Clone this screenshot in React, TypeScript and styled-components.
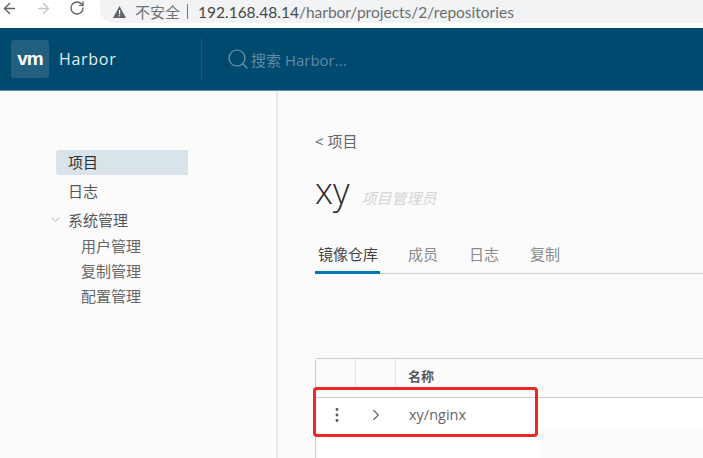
import styled, { createGlobalStyle } from "styled-components";
import { ChevronDown, ChevronRight, RotateCw, ArrowLeft, ArrowRight, Search } from "lucide-react";

const GlobalStyle = createGlobalStyle`
  html, body {
    margin: 0;
    padding: 0;
    height: 458px;
    overflow: hidden;
    background: #fbfbfb;
    font-family: "Open Sans", "Noto Sans CJK SC", sans-serif;
  }
`;

const Page = styled.div`
  width: 703px;
  height: 458px;
  display: flex;
  flex-direction: column;
  overflow: hidden;
`;

const BrowserBar = styled.div`
  height: 28px;
  flex: none;
  background: #fff;
  display: flex;
  align-items: flex-start;
`;

const NavIcons = styled.div`
  width: 100px;
  flex: none;
  height: 16px;
  padding-left: 1px;
  box-sizing: border-box;
  display: flex;
  align-items: center;
  gap: 17px;
`;

const AddressBar = styled.div`
  flex: 1;
  height: 23px;
  background: #f1f3f4;
  border-bottom-left-radius: 14px;
  display: flex;
  align-items: center;
  padding-left: 13px;
  color: #5f6368;
  white-space: nowrap;
  margin-right: -4px;
`;

const Warning = styled.svg`
  width: 13px;
  height: 12px;
  margin-right: 9px;
`;

const Insecure = styled.span`
  font-size: 15px;
  color: #6f7275;
`;

const Divider = styled.span`
  width: 1px;
  height: 15px;
  background: #777;
  margin: 0 10px 0 7px;
`;

const Url = styled.span`
  font-family: "Lato", sans-serif;
  font-size: 15.5px;
  color: #6a6e72;
`;

const Host = styled.span`
  color: #45484b;
`;

const Header = styled.header`
  height: 63px;
  flex: none;
  background: #004a70;
  border-bottom: 1px solid #5d94ad;
  box-sizing: border-box;
  display: flex;
  align-items: center;
  padding-left: 11px;
`;

const Logo = styled.div`
  width: 38px;
  height: 38px;
  border-radius: 3px;
  background: #235f7e;
  color: #fff;
  font-family: "Liberation Sans", sans-serif;
  font-weight: 700;
  font-size: 19px;
  letter-spacing: -1px;
  display: flex;
  align-items: center;
  justify-content: center;
`;

const Brand = styled.div`
  width: 142px;
  margin-left: 10px;
  color: #e4edf2;
  font-size: 16px;
  letter-spacing: 0.7px;
`;

const HeaderRule = styled.div`
  width: 1px;
  height: 42px;
  background: #175c7e;
`;

const SearchBox = styled.div`
  margin-left: 24px;
  display: flex;
  align-items: center;
  gap: 1px;
  color: #5f8ba3;
  font-size: 15px;
`;

const Body = styled.div`
  flex: 1;
  display: flex;
  min-height: 0;
`;

const Sidebar = styled.nav`
  width: 278px;
  flex: none;
  box-sizing: border-box;
  border-right: 2px solid #e8e8e8;
  padding: 59px 0 0 56px;
  font-size: 15px;
  color: #565656;
`;

const NavItem = styled.div<{ $active?: boolean }>`
  width: 132px;
  height: 25px;
  margin-bottom: 4px;
  box-sizing: border-box;
  padding: 0 0 3px 12px;
  display: flex;
  align-items: center;
  border-radius: 3px 0 0 3px;
  background: ${(p) => (p.$active ? "#d9e4ea" : "transparent")};
  color: ${(p) => (p.$active ? "#2f2f2f" : "#565656")};
`;

const GroupTitle = styled.div`
  height: 25px;
  box-sizing: border-box;
  padding-bottom: 2px;
  display: flex;
  align-items: center;
  margin-left: -8px;
  gap: 5px;
  color: #565656;
`;

const SubItem = styled.div`
  height: 25px;
  box-sizing: border-box;
  padding: 0 0 1px 25px;
  display: flex;
  align-items: center;
  color: #666;
`;

const Main = styled.main`
  flex: 1;
  min-width: 0;
  padding: 39px 0 0 37px;
`;

const BackLink = styled.div`
  font-size: 15px;
  line-height: 22px;
  color: #666;
`;

const TitleRow = styled.div`
  display: flex;
  align-items: baseline;
  margin-top: 16px;
  height: 46px;
`;

const Title = styled.h1`
  margin: 0;
  font-weight: 300;
  font-size: 36px;
  line-height: 46px;
  color: #2b2b2b;
`;

const Role = styled.span`
  margin-left: 12px;
  font-size: 15px;
  font-style: italic;
  color: #d4d4d4;
`;

const Tabs = styled.div`
  display: flex;
  margin-top: 25px;
  border-bottom: 1px solid #cfcfcf;
  height: 34px;
`;

const Tab = styled.div<{ $active?: boolean }>`
  font-size: 15px;
  line-height: 30px;
  height: 35px;
  box-sizing: border-box;
  margin-right: ${(p) => (p.$active ? "28px" : "31px")};
  padding: 0 ${(p) => (p.$active ? "2px 0 3px" : "0")};
  color: ${(p) => (p.$active ? "#444" : "#8a8a8a")};
  border-bottom: ${(p) => (p.$active ? "3px solid #0079b8" : "none")};
`;

const Grid = styled.div`
  position: relative;
  margin-top: 84px;
  border: 1px solid #cccccc;
  border-right: none;
  border-radius: 3px 0 0 0;
  height: 120px;
`;

const HeadRow = styled.div`
  display: flex;
  height: 39px;
  box-sizing: border-box;
  border-bottom: 1px solid #cccccc;
  background: #fbfbfb;
`;

const HeadCell = styled.div<{ $w?: number }>`
  width: ${(p) => (p.$w ? `${p.$w}px` : "auto")};
  flex: ${(p) => (p.$w ? "none" : "1")};
  height: 31px;
  box-sizing: border-box;
  border-right: ${(p) => (p.$w ? "1px solid #e6e6e6" : "none")};
  padding-left: ${(p) => (p.$w ? "0" : "12px")};
  display: flex;
  align-items: center;
  padding-top: 2px;
  font-size: 13px;
  font-weight: 700;
  color: #575757;
`;

const DataRow = styled.div`
  display: flex;
  height: 30px;
  box-sizing: border-box;
  padding-top: 3px;
  align-items: center;
  background: #fff;
  font-size: 14.5px;
  color: #666;
`;

const ActionCell = styled.div<{ $w: number; $shift?: number }>`
  width: ${(p) => p.$w}px;
  padding-left: ${(p) => p.$shift ?? 0}px;
  box-sizing: border-box;
  flex: none;
  display: flex;
  justify-content: center;
  align-items: center;
`;

const NameCell = styled.div`
  padding-left: 13px;
`;

const Rest = styled.div`
  width: 224px;
  height: 50px;
  background: #fff;
`;

const Highlight = styled.div`
  position: absolute;
  left: -3px;
  top: 28px;
  width: 225px;
  height: 50px;
  box-sizing: border-box;
  border: 3px solid #ee2724;
  border-radius: 4px;
`;

export default function App() {
  return (
    <Page>
      <GlobalStyle />
      <BrowserBar>
        <NavIcons>
          <ArrowLeft size={17} color="#5f6368" />
          <ArrowRight size={17} color="#c2c4c6" />
          <RotateCw size={16} color="#5f6368" />
        </NavIcons>
        <AddressBar>
          <Warning viewBox="0 0 13 12">
            <path d="M6.5 0 13 12H0z" fill="#5f6368" />
            <rect x="5.9" y="4" width="1.3" height="4.2" fill="#f1f3f4" />
            <rect x="5.9" y="9" width="1.3" height="1.4" fill="#f1f3f4" />
          </Warning>
          <Insecure>不安全</Insecure>
          <Divider />
          <Url>
            <Host>192.168.48.14</Host>/harbor/projects/2/repositories
          </Url>
        </AddressBar>
      </BrowserBar>
      <Header>
        <Logo>vm</Logo>
        <Brand>Harbor</Brand>
        <HeaderRule />
        <SearchBox>
          <Search size={24} strokeWidth={1.2} color="#6e9ab1" />
          搜索 Harbor...
        </SearchBox>
      </Header>
      <Body>
        <Sidebar>
          <NavItem $active>项目</NavItem>
          <NavItem>日志</NavItem>
          <GroupTitle>
            <ChevronDown size={15} strokeWidth={1.2} color="#999" />
            系统管理
          </GroupTitle>
          <SubItem>用户管理</SubItem>
          <SubItem>复制管理</SubItem>
          <SubItem>配置管理</SubItem>
        </Sidebar>
        <Main>
          <BackLink>&lt; 项目</BackLink>
          <TitleRow>
            <Title>xy</Title>
            <Role>项目管理员</Role>
          </TitleRow>
          <Tabs>
            <Tab $active>镜像仓库</Tab>
            <Tab>成员</Tab>
            <Tab>日志</Tab>
            <Tab>复制</Tab>
          </Tabs>
          <Grid>
            <HeadRow>
              <HeadCell $w={40} />
              <HeadCell $w={40} />
              <HeadCell>名称</HeadCell>
            </HeadRow>
            <DataRow>
              <ActionCell $w={40} $shift={2}>
                <svg width="4" height="16" viewBox="0 0 4 16">
                  <circle cx="2" cy="2.5" r="1.4" fill="#555" />
                  <circle cx="2" cy="8" r="1.4" fill="#555" />
                  <circle cx="2" cy="13.5" r="1.4" fill="#555" />
                </svg>
              </ActionCell>
              <ActionCell $w={40}>
                <ChevronRight size={18} strokeWidth={1.6} color="#666" />
              </ActionCell>
              <NameCell>xy/nginx</NameCell>
            </DataRow>
            <Rest />
            <Highlight />
          </Grid>
        </Main>
      </Body>
    </Page>
  );
}
